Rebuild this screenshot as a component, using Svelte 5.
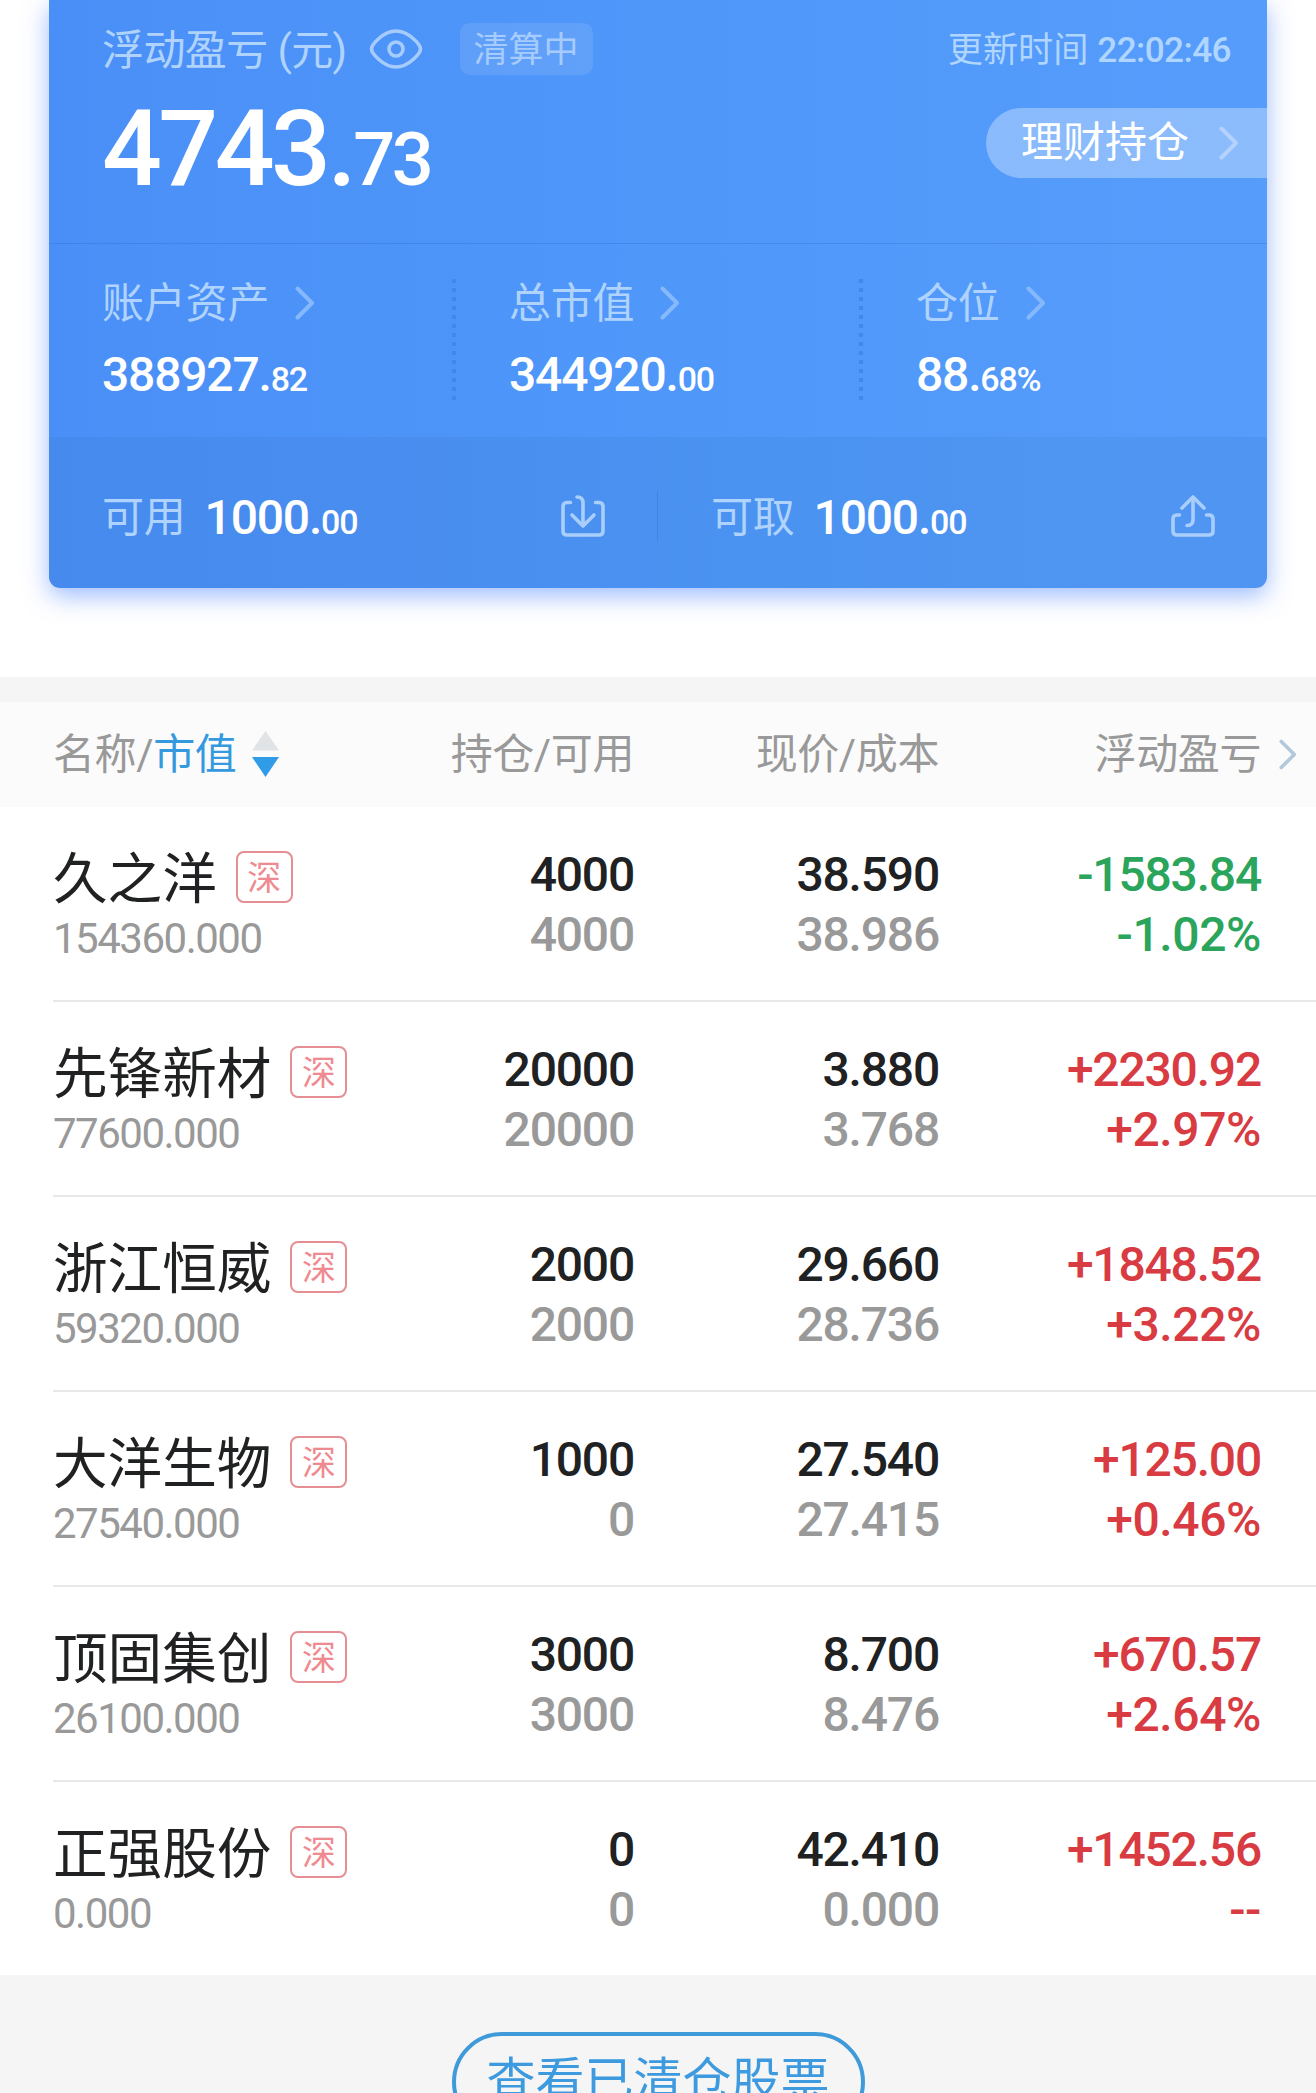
<script>
  const stats = [
    { label: '账户资产', whole: '388927.', rest: '82' },
    { label: '总市值', whole: '344920.', rest: '00' },
    { label: '仓位', whole: '88.', rest: '68%' }
  ];

  const holdings = [
    { name: '久之洋', value: '154360.000', held: '4000', usable: '4000', price: '38.590', cost: '38.986', profit: '-1583.84', ratio: '-1.02%' },
    { name: '先锋新材', value: '77600.000', held: '20000', usable: '20000', price: '3.880', cost: '3.768', profit: '+2230.92', ratio: '+2.97%' },
    { name: '浙江恒威', value: '59320.000', held: '2000', usable: '2000', price: '29.660', cost: '28.736', profit: '+1848.52', ratio: '+3.22%' },
    { name: '大洋生物', value: '27540.000', held: '1000', usable: '0', price: '27.540', cost: '27.415', profit: '+125.00', ratio: '+0.46%' },
    { name: '顶固集创', value: '26100.000', held: '3000', usable: '3000', price: '8.700', cost: '8.476', profit: '+670.57', ratio: '+2.64%' },
    { name: '正强股份', value: '0.000', held: '0', usable: '0', price: '42.410', cost: '0.000', profit: '+1452.56', ratio: '--' }
  ];
</script>

{#snippet chevron()}
  <svg class="chevron" width="20" height="34" viewBox="0 0 20 34">
    <path d="M2.5 2.5 L17 17 L2.5 31.5" />
  </svg>
{/snippet}

<div class="page">
  <section class="card">
    <div class="summary">
      <div class="summary-head">
        <span class="label title">浮动盈亏 (元)</span>
        <svg class="eye" width="54" height="40" viewBox="0 0 54 40">
          <path d="M2.5 20 C2.5 16 14 2 27 2 C40 2 51.5 16 51.5 20 C51.5 24 40 38 27 38 C14 38 2.5 24 2.5 20 Z" />
          <circle cx="27" cy="20" r="7" />
        </svg>
        <span class="status">清算中</span>
        <span class="updated">更新时间 <span class="time">22:02:46</span></span>
      </div>
      <div class="summary-body">
        <div class="total">4743.<small>73</small></div>
        <button class="wealth"><span>理财持仓</span> {@render chevron()}</button>
      </div>
    </div>

    <div class="stats">
      {#each stats as stat}
        <div class="stat">
          <div class="stat-label">{stat.label} {@render chevron()}</div>
          <div class="amount">{stat.whole}<small>{stat.rest}</small></div>
        </div>
      {/each}
    </div>

    <div class="cash">
      <div class="cash-item">
        <span class="label">可用</span>
        <span class="amount">1000.<small>00</small></span>
        <svg class="transfer" width="44" height="42" viewBox="0 0 44 42">
          <path d="M9.5 7.5 H6 Q2 7.5 2 11.5 V36 Q2 40 6 40 H38 Q42 40 42 36 V11.5 Q42 7.5 38 7.5 H34.5" />
          <path d="M16 2 Q22 2 22 8 V30" />
          <path d="M11 20 L22 31 L33 20" />
        </svg>
      </div>
      <div class="cash-item">
        <span class="label">可取</span>
        <span class="amount">1000.<small>00</small></span>
        <svg class="transfer" width="44" height="42" viewBox="0 0 44 42">
          <path d="M8.5 20 H6 Q2 20 2 24 V36 Q2 40 6 40 H38 Q42 40 42 36 V24 Q42 20 38 20 H35.5" />
          <path d="M16 30.5 Q22 30.5 22 25 V3" />
          <path d="M11 13 L22 2 L33 13" />
        </svg>
      </div>
    </div>
  </section>

  <section class="holdings">
    <div class="row table-head">
      <div class="cell name-cell">
        <span>名称/<span class="sorted">市值</span></span>
        <svg class="sort" width="27" height="46" viewBox="0 0 27 46">
          <path class="up" d="M13.5 0 L27 19.5 H0 Z" />
          <path class="down" d="M0 26 H27 L13.5 46 Z" />
        </svg>
      </div>
      <div class="cell">持仓/可用</div>
      <div class="cell">现价/成本</div>
      <div class="cell">浮动盈亏</div>
      <div class="more">{@render chevron()}</div>
    </div>

    {#each holdings as item}
      <div class="row holding">
        <div class="name-cell">
          <div class="name">{item.name}<span class="market">深</span></div>
          <div class="value">{item.value}</div>
        </div>
        <div class="cell">
          <div>{item.held}</div>
          <div class="muted">{item.usable}</div>
        </div>
        <div class="cell">
          <div>{item.price}</div>
          <div class="muted">{item.cost}</div>
        </div>
        <div class="cell" class:loss={item.profit.startsWith('-')} class:gain={item.profit.startsWith('+')}>
          <div>{item.profit}</div>
          <div class="ratio">{item.ratio}</div>
        </div>
      </div>
    {/each}
  </section>

  <footer>
    <button class="closed">查看已清仓股票</button>
  </footer>
</div>

<style>
  :global(body) {
    margin: 0;
    background: #fff;
  }

  .page {
    width: 1316px;
    height: 2093px;
    overflow: hidden;
    display: flex;
    flex-direction: column;
    background: #fff;
    font-family: Roboto, 'Noto Sans CJK SC', sans-serif;
    color: #202122;
  }

  button {
    margin: 0;
    border: none;
    background: none;
    font-family: inherit;
    white-space: nowrap;
  }

  .chevron {
    fill: none;
    stroke: currentColor;
    stroke-width: 4;
    stroke-linecap: round;
    stroke-linejoin: round;
    flex-shrink: 0;
  }

  /* Account card */
  .card {
    box-sizing: border-box;
    height: 588px;
    margin: 0 49px 89px;
    flex-shrink: 0;
    display: flex;
    flex-direction: column;
    color: #fff;
    background: linear-gradient(90deg, #4a8ff7, #5099fa 60%, #569cfb);
    border-radius: 0 0 11px 11px;
    box-shadow: 0 8px 24px rgba(64, 124, 252, 0.5);
  }

  .summary {
    box-sizing: border-box;
    height: 244px;
    padding: 23px 0 0 53px;
    border-bottom: 1px solid rgba(30, 80, 180, 0.2);
  }

  .summary-head {
    display: flex;
    align-items: center;
    height: 52px;
  }

  .label,
  .stat-label {
    font-size: 42px;
    line-height: 52px;
    letter-spacing: -0.2px;
    color: #b0d3fd;
  }

  .label {
    padding-top: 3px;
  }

  .title {
    letter-spacing: -0.6px;
  }

  .eye {
    margin-left: 22px;
    fill: none;
    stroke: #a6cbfd;
    stroke-width: 3.6;
  }

  .status {
    box-sizing: border-box;
    width: 133px;
    height: 52px;
    margin-left: 37px;
    border-radius: 10px;
    background: rgba(255, 255, 255, 0.1);
    font-size: 35px;
    line-height: 55px;
    text-align: center;
    color: #a6cbfd;
  }

  .updated {
    margin-left: auto;
    padding-top: 2px;
    padding-right: 36px;
    font-size: 35.2px;
    line-height: 52px;
    color: #b0d5fe;
  }

  .time {
    font-weight: 500;
    letter-spacing: -0.6px;
  }

  .summary-body {
    display: flex;
    justify-content: space-between;
    margin-top: 24px;
  }

  .total {
    font-size: 105.5px;
    font-weight: 500;
    line-height: 100px;
    letter-spacing: -3.6px;
  }

  .total small {
    font-size: 74px;
    line-height: 1;
    letter-spacing: -3.4px;
  }

  .wealth {
    box-sizing: border-box;
    display: flex;
    justify-content: space-between;
    align-items: center;
    width: 281px;
    height: 70px;
    margin-top: 9px;
    padding: 0 28px 0 35px;
    border-radius: 35px 0 0 35px;
    background: rgba(255, 255, 255, 0.32);
    font-size: 42px;
    line-height: 52px;
    color: #fff;
  }

  .wealth span {
    padding-bottom: 1px;
  }

  .wealth .chevron {
    color: #b5d2fe;
  }

  .stats {
    display: grid;
    grid-template-columns: 407px 407px 1fr;
    height: 193px;
  }

  .stat {
    padding: 34px 0 0 53px;
    background-repeat: no-repeat;
  }

  .stat:not(:last-child) {
    background-image: repeating-linear-gradient(180deg, #4586e9 0 4px, transparent 4px 9px);
    background-size: 4px 121px;
    background-position: right 0 top 35px;
  }

  .stat-label {
    display: flex;
    align-items: center;
    gap: 26px;
  }

  .stat-label .chevron {
    margin-bottom: 2px;
    color: #86b8fc;
  }

  .amount {
    font-size: 48px;
    font-weight: 500;
    line-height: 60px;
    letter-spacing: -1.2px;
  }

  .amount small {
    font-size: 34px;
    line-height: 1;
  }

  .stat .amount {
    margin-top: 15px;
  }

  .cash {
    display: grid;
    grid-template-columns: 609px 609px;
    align-items: center;
    flex: 1;
    padding-top: 7px;
    border-radius: 0 0 11px 11px;
    background: rgba(38, 84, 160, 0.09);
  }

  .cash-item {
    box-sizing: border-box;
    display: flex;
    align-items: center;
    height: 50px;
    padding: 0 52px 0 53px;
  }

  .cash-item:first-child {
    border-right: 1px solid rgba(30, 80, 180, 0.2);
  }

  .cash-item .amount {
    margin-left: 19px;
    padding-top: 4px;
  }

  .transfer {
    margin-left: auto;
    fill: none;
    stroke: #a9cefb;
    stroke-width: 3.6;
    stroke-linecap: round;
    stroke-linejoin: round;
  }

  /* Positions table */
  .holdings {
    border-top: 25px solid #f5f5f5;
    flex-shrink: 0;
  }

  .row {
    display: grid;
    grid-template-columns: 281px 300px 305px 322px 1fr;
    padding-left: 53px;
  }

  .cell {
    text-align: right;
    white-space: nowrap;
  }

  .table-head {
    height: 105px;
    align-items: center;
    background: #fbfbfb;
    font-size: 42px;
    line-height: 101px;
    letter-spacing: -0.4px;
    color: #999;
  }

  .table-head .cell {
    height: 101px;
  }

  .table-head .name-cell {
    display: flex;
    align-items: center;
    gap: 16px;
  }

  .sorted {
    color: #3499df;
  }

  .sort {
    margin-bottom: 1px;
  }

  .up {
    fill: #e1e4e7;
  }

  .down {
    fill: #309ce8;
  }

  .more {
    display: flex;
    padding-left: 18px;
    color: #b4c8dc;
  }

  .more .chevron {
    width: 18px;
    height: 31px;
  }

  .holding {
    box-sizing: border-box;
    height: 195px;
    font-size: 48px;
    font-weight: 500;
    line-height: 60px;
    letter-spacing: -1.2px;
    padding-top: 38px;
    padding-left: 0;
    margin-left: 53px;
    border-bottom: 2px solid #e8e8e8;
  }

  .holding:last-child {
    height: 193px;
    border-bottom: none;
  }

  .name {
    display: flex;
    align-items: center;
    margin-top: 4px;
    font-size: 54.6px;
    font-weight: 400;
    letter-spacing: 0;
    white-space: nowrap;
  }

  .market {
    box-sizing: border-box;
    flex-shrink: 0;
    width: 57px;
    height: 52px;
    margin: -4px 0 0 19px;
    border: 2px solid #e58f94;
    border-radius: 8px;
    font-size: 34px;
    line-height: 50px;
    text-align: center;
    color: #ef8a90;
  }

  .value {
    margin-top: 4px;
    font-size: 42px;
    font-weight: 400;
    line-height: 52px;
    letter-spacing: -1.5px;
    color: #999;
  }

  .muted {
    color: #999;
  }

  .ratio {
    letter-spacing: -0.4px;
  }

  .loss {
    color: #2ba55b;
  }

  .gain {
    color: #d83b42;
  }

  footer {
    flex: 1;
    display: flex;
    justify-content: center;
    align-items: flex-start;
    padding-top: 57px;
    background: #f5f5f5;
  }

  .closed {
    box-sizing: border-box;
    width: 413px;
    height: 100px;
    border: 4px solid #3e9ad9;
    border-radius: 50px;
    padding: 0;
    font-size: 49px;
    line-height: 92px;
    color: #3d9ade;
  }
</style>
